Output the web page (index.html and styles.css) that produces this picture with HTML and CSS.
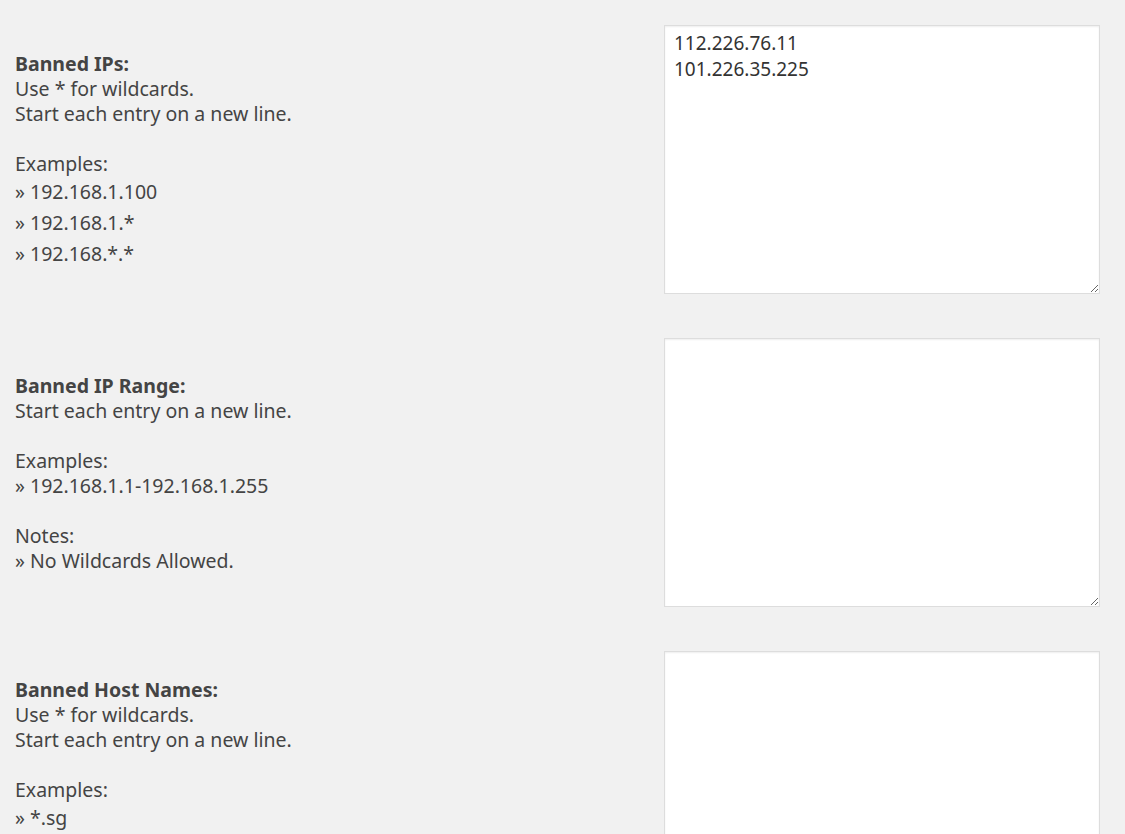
FILE: index.html
```html
<!DOCTYPE html>
<html lang="en">

<head>
    <meta charset="UTF-8">
    <meta name="viewport" content="width=device-width, initial-scale=1.0">
    <title>Ban Settings</title>
    <link rel="stylesheet" href="styles.css">
</head>

<body>
    <div class="settings">
        <div class="setting-row">
            <div class="setting-label">
                <strong>Banned IPs:</strong><br>
                Use * for wildcards.<br>
                Start each entry on a new line.<br>
                <br>
                Examples:
                <div class="example-list">
                    <div>&raquo; 192.168.1.100</div>
                    <div>&raquo; 192.168.1.*</div>
                    <div>&raquo; 192.168.*.*</div>
                </div>
            </div>
            <textarea class="setting-input" name="banned_ips">112.226.76.11
101.226.35.225</textarea>
        </div>

        <div class="setting-row">
            <div class="setting-label">
                <strong>Banned IP Range:</strong><br>
                Start each entry on a new line.<br>
                <br>
                Examples:<br>
                &raquo; 192.168.1.1-192.168.1.255<br>
                <br>
                Notes:<br>
                &raquo; No Wildcards Allowed.
            </div>
            <textarea class="setting-input" name="banned_range"></textarea>
        </div>

        <div class="setting-row">
            <div class="setting-label setting-label--long">
                <strong>Banned Host Names:</strong><br>
                Use * for wildcards.<br>
                Start each entry on a new line.<br>
                <br>
                Examples:
                <div class="example-list">
                    <div>&raquo; *.sg</div>
                </div>
            </div>
            <textarea class="setting-input" name="banned_hosts"></textarea>
        </div>
    </div>
</body>

</html>
```

FILE: styles.css
```css
* {
    margin: 0;
    padding: 0;
    box-sizing: border-box;
}

body {
    background-color: #f1f1f1;
    color: #444444;
    font-family: "Noto Sans", "Open Sans", sans-serif;
    font-size: 19.5px;
    line-height: 25px;
}

.settings {
    padding: 3px 25px 0 15px;
}

.setting-row {
    display: grid;
    grid-template-columns: 1fr 436px;
    align-items: center;
    padding: 22px 0;
}

.setting-label strong {
    font-weight: 700;
}

.setting-label--long {
    padding-bottom: 62px;
}

.example-list div {
    line-height: 31px;
}

.setting-input {
    display: block;
    width: 436px;
    height: 269px;
    padding: 4px 9px;
    background: #ffffff;
    border: 1px solid #dddddd;
    box-shadow: inset 0 1px 2px rgba(0, 0, 0, 0.07);
    color: #333333;
    font-family: inherit;
    font-size: 19px;
    line-height: 26px;
    resize: vertical;
    outline: none;
}
```
